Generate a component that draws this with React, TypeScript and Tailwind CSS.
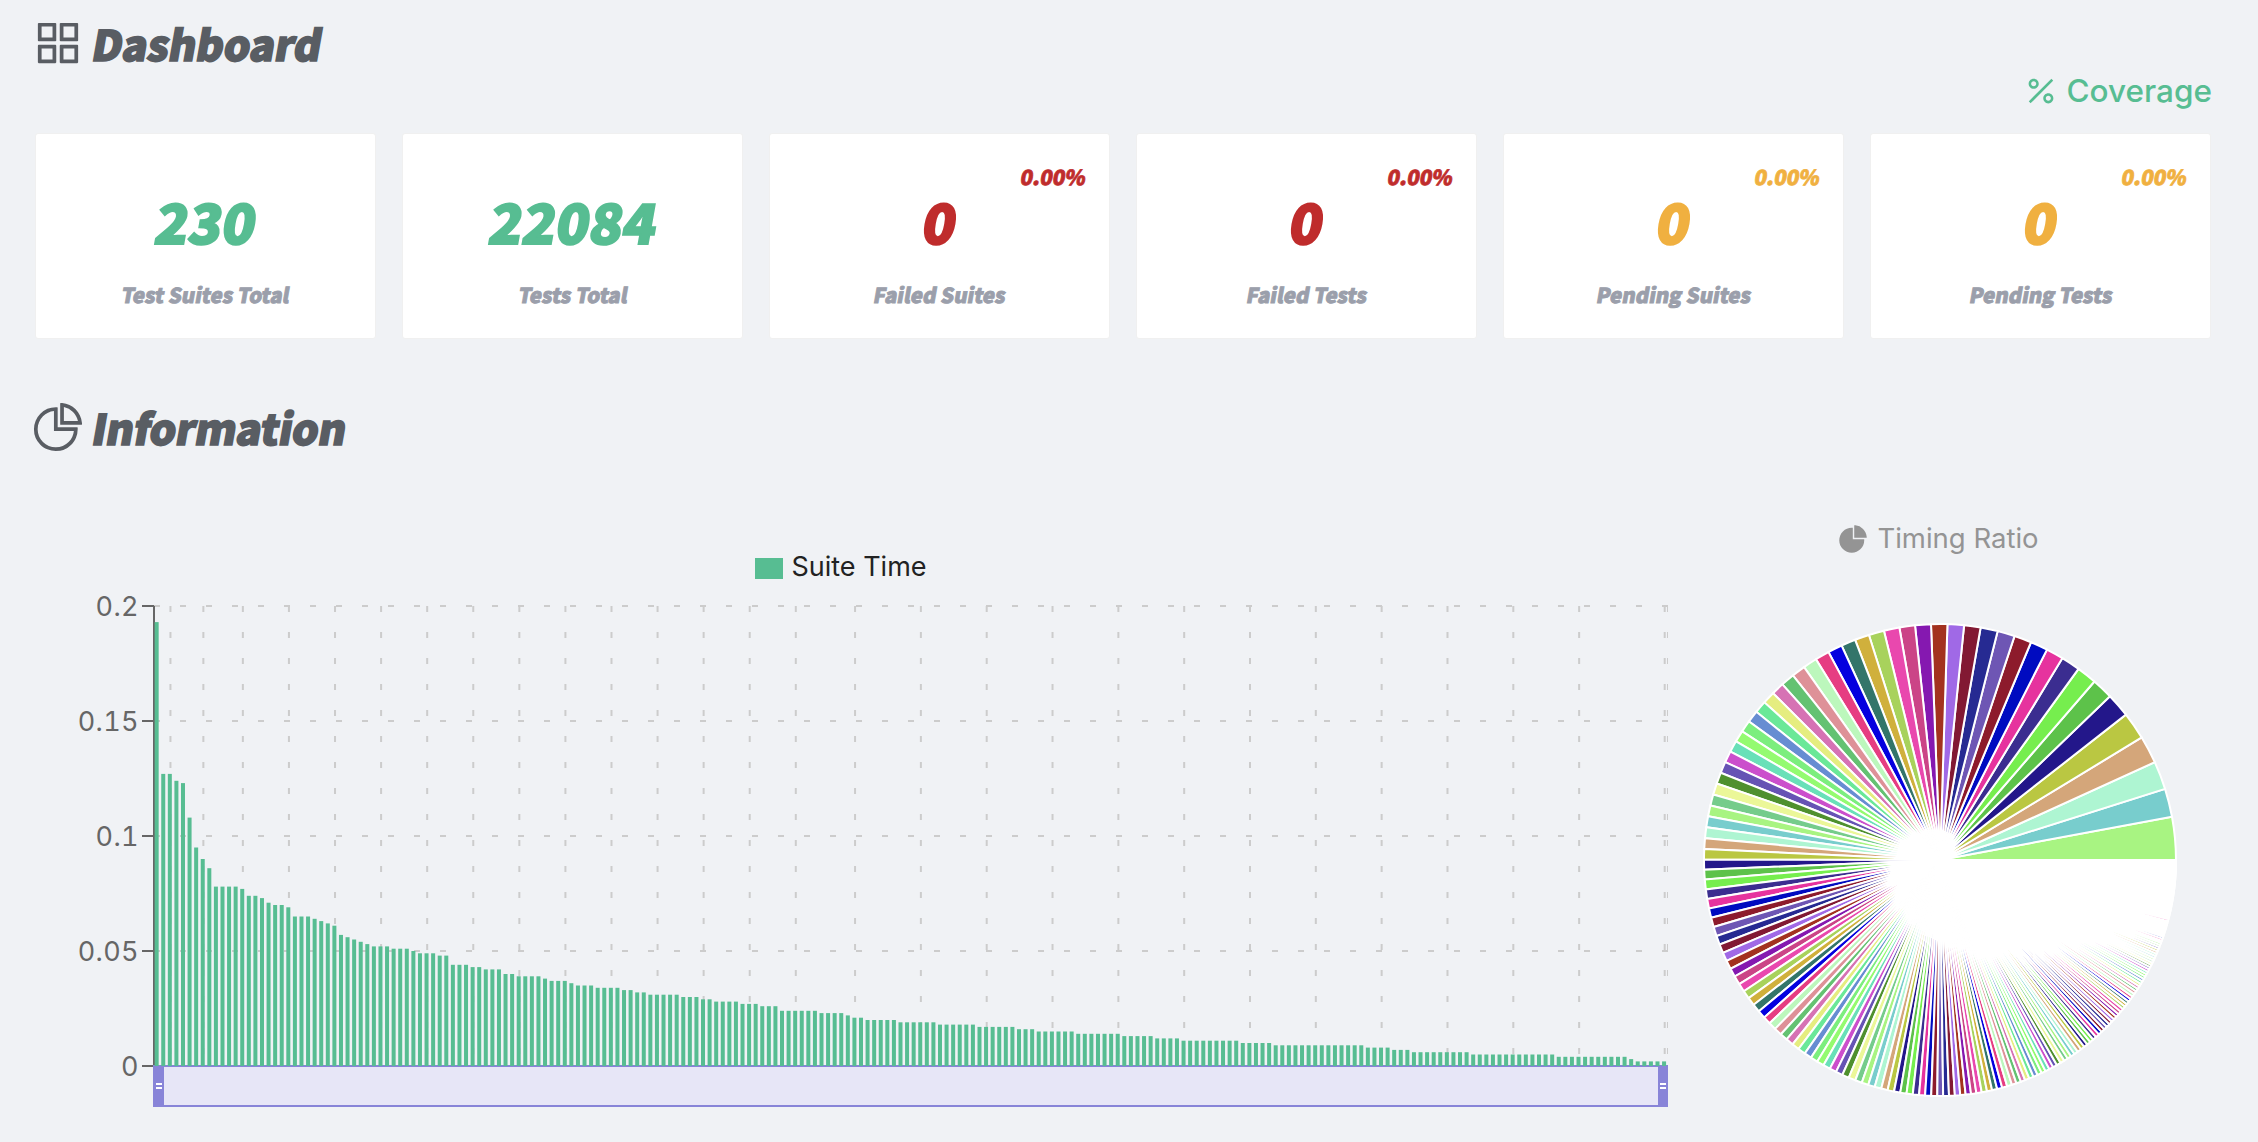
import { AiFillPieChart, AiOutlineAppstore, AiOutlinePercentage, AiOutlinePieChart } from "react-icons/ai";

const DISPLAY = "font-['Noto_Sans_CJK_SC','Noto_Sans_CJK_JP',sans-serif]";

type Stat = { value: string; label: string; tone: string; rate?: string };

const stats: Stat[] = [
  { value: "230", label: "Test Suites Total", tone: "text-[#57bd92]" },
  { value: "22084", label: "Tests Total", tone: "text-[#57bd92]" },
  { value: "0", label: "Failed Suites", tone: "text-[#bf2c2c]", rate: "0.00%" },
  { value: "0", label: "Failed Tests", tone: "text-[#bf2c2c]", rate: "0.00%" },
  { value: "0", label: "Pending Suites", tone: "text-[#f0b040]", rate: "0.00%" },
  { value: "0", label: "Pending Tests", tone: "text-[#f0b040]", rate: "0.00%" },
];

// [milliseconds, number of suites], slowest first
const timingRuns: [number, number][] = [
  [193, 1], [127, 2], [124, 1], [123, 1], [108, 1], [95, 1], [90, 1], [86, 1], [78, 4], [77, 1],
  [74, 2], [73, 1], [71, 1], [70, 2], [69, 1], [65, 3], [64, 1], [63, 1], [62, 1], [61, 1],
  [57, 1], [56, 1], [55, 1], [54, 1], [53, 1], [52, 3], [51, 3], [50, 1], [49, 3], [48, 2],
  [44, 3], [43, 2], [42, 3], [40, 2], [39, 4], [38, 1], [37, 3], [36, 1], [35, 3], [34, 4],
  [33, 2], [32, 2], [31, 5], [30, 3], [29, 2], [28, 4], [27, 3], [26, 3], [24, 6], [23, 4],
  [22, 1], [21, 2], [20, 5], [19, 6], [18, 6], [17, 6], [16, 3], [15, 6], [14, 7], [13, 5],
  [12, 4], [11, 9], [10, 5], [9, 14], [8, 4], [7, 3], [6, 9], [5, 13], [4, 11], [3, 1], [2, 5],
];
const timings = timingRuns.flatMap(([ms, count]) => Array<number>(count).fill(ms));

const palette = [
  "#a8f482", "#78cdcd", "#aef5d2", "#d4a67a", "#bac742", "#23178a", "#5dc24a", "#76ee4e", "#3b2d90", "#e6339e",
  "#000bc0", "#8d1b2c", "#6e56b4", "#262a92", "#821933", "#a069e6", "#a3321f", "#8518b0", "#cb4487", "#e948ae",
  "#a8d25c", "#d0b03c", "#33756a", "#0500df", "#e63d82", "#bcf7bc", "#de9198", "#64c272", "#d672b4", "#e5ed80",
  "#6ae898", "#678dd2", "#7cee7e", "#94fb70", "#69e0b8", "#cb4fcc", "#6653b4", "#4f902e", "#ebf798", "#75cc8b",
];

const LEFT = 118;
const TOP = 26;
const PLOT_W = 1514;
const PLOT_H = 460;
const BOTTOM = TOP + PLOT_H;
const BAND = PLOT_W / timings.length;
const gridColumns = [
  2, 7, 13, 20, 27, 34, 41, 48, 55, 62, 69, 76, 83, 90, 97, 106, 116, 126, 136, 146, 156, 166, 176, 186, 196, 206, 216, 229,
];
const yTicks = ["0.2", "0.15", "0.1", "0.05", "0"];

function SuiteTimeChart() {
  return (
    <svg width={1632} height={530} viewBox="0 0 1632 530" className="block">
      <g stroke="#ccc" strokeWidth={2} strokeDasharray="6 20">
        {yTicks.map((t, i) => (
          <line key={t} x1={LEFT} x2={LEFT + PLOT_W} y1={TOP + i * 115} y2={TOP + i * 115} />
        ))}
        {gridColumns.map((c) => (
          <line key={c} x1={LEFT + (c + 0.5) * BAND} x2={LEFT + (c + 0.5) * BAND} y1={TOP} y2={BOTTOM} />
        ))}
        <line x1={LEFT + PLOT_W} x2={LEFT + PLOT_W} y1={TOP} y2={BOTTOM} />
      </g>
      <g stroke="#666" strokeWidth={2}>
        <line x1={LEFT} x2={LEFT} y1={TOP} y2={BOTTOM} />
        {yTicks.map((t, i) => (
          <line key={t} x1={LEFT - 12} x2={LEFT} y1={TOP + i * 115} y2={TOP + i * 115} />
        ))}
      </g>
      <g fill="#666" fontSize={27} textAnchor="end" className="font-['Inter',sans-serif] tracking-[0.4px] tabular-nums">
        {yTicks.map((t, i) => (
          <text key={t} x={LEFT - 15} y={TOP + i * 115 + 10}>
            {t}
          </text>
        ))}
      </g>
      <rect x={LEFT} y={BOTTOM} width={PLOT_W} height={40} fill="#e7e6f7" stroke="#8884d8" strokeWidth={2} />
      {[LEFT, LEFT + PLOT_W - 10].map((x) => (
        <g key={x}>
          <rect x={x} y={BOTTOM} width={10} height={40} fill="#8884d8" />
          <path d={`M${x + 2} ${BOTTOM + 18}h6M${x + 2} ${BOTTOM + 22}h6`} stroke="#fff" strokeWidth={2} />
        </g>
      ))}
      <g fill="#57bd92">
        {timings.map((ms, i) => (
          <rect key={i} x={LEFT + i * BAND + BAND * 0.1} y={BOTTOM - ms * 2.3} width={4} height={ms * 2.3} />
        ))}
      </g>
    </svg>
  );
}

function TimingPie() {
  const total = timings.reduce((a, b) => a + b, 0);
  const r = 236;
  let angle = 0;
  return (
    <svg width={476} height={476} viewBox="-238 -238 476 476" className="block">
      <g stroke="#fff" strokeWidth={2}>
        {timings.map((ms, i) => {
          const a = angle;
          angle += (ms / total) * Math.PI * 2;
          const from = `${r * Math.cos(a)} ${-r * Math.sin(a)}`;
          const to = `${r * Math.cos(angle)} ${-r * Math.sin(angle)}`;
          return <path key={i} d={`M${from}A${r} ${r} 0 0 0 ${to}L0 0Z`} fill={palette[i % palette.length]} />;
        })}
      </g>
    </svg>
  );
}

function StatCard({ value, label, tone, rate }: Stat) {
  return (
    <div className={`relative flex h-[206px] flex-col items-center rounded-[3px] border border-[#f0f0f0] bg-white font-black ${DISPLAY}`}>
      {rate && (
        <div className={`absolute right-[23px] top-[26px] -skew-x-[10deg] text-[20.6px] leading-8 [-webkit-text-stroke:0.8px] ${tone}`}>
          {rate}
        </div>
      )}
      <div className={`ml-[3px] mt-[46px] -skew-x-[10deg] text-[54.8px] leading-[80px] [-webkit-text-stroke:2px] ${tone}`}>{value}</div>
      <div className="ml-0.5 mt-[18px] -skew-x-[10deg] text-[20.5px] leading-8 text-[#9b9fab] [-webkit-text-stroke:0.9px]">
        {label}
      </div>
    </div>
  );
}

export default function App() {
  return (
    <div className="h-[1142px] w-[2258px] overflow-hidden bg-[#f0f2f5] px-[35px] font-['Inter',sans-serif]">
      <h1 className={`-ml-[5px] flex h-[86px] items-center gap-[7px] text-[#595d63] ${DISPLAY}`}>
        <AiOutlineAppstore size={56} />
        <span className="-skew-x-[10deg] pb-[2px] text-[42px] font-black tracking-[-0.2px] [-webkit-text-stroke:1.6px]">Dashboard</span>
      </h1>
      <div className="flex h-[47px] justify-end pr-[11px] pt-[5px]">
        <a className="flex h-0 items-center gap-2 text-[31.5px] font-medium text-[#57bd92]">
          <AiOutlinePercentage size={36} />
          Coverage
        </a>
      </div>
      <div className="grid w-[2176px] grid-cols-6 gap-[26px]">
        {stats.map((s) => (
          <StatCard key={s.label} {...s} />
        ))}
      </div>
      <h2 className={`-ml-[5px] mt-[43px] flex h-[90px] items-center gap-[7px] text-[#595d63] ${DISPLAY}`}>
        <AiOutlinePieChart size={56} />
        <span className="-skew-x-[10deg] pb-[2px] text-[42px] font-black tracking-[-0.3px] [-webkit-text-stroke:1.6px]">Information</span>
      </h2>
      <div className="flex">
        <section className="w-[1633px] pl-px pt-[82px]">
          <div className="flex h-[26px] items-center justify-center gap-2 pr-[22px] text-[27px] text-[#222]">
            <span className="mt-[3px] h-[21px] w-7 bg-[#57bd92]" />
            Suite Time
          </div>
          <SuiteTimeChart />
        </section>
        <section className="flex w-[544px] flex-col items-center">
          <div className="mr-1 mt-[49px] flex h-[36px] items-center gap-2 text-[27.5px] text-[#949494]">
            <AiFillPieChart size={32} />
            Timing Ratio
          </div>
          <div className="mt-[65px]">
            <TimingPie />
          </div>
        </section>
      </div>
    </div>
  );
}
